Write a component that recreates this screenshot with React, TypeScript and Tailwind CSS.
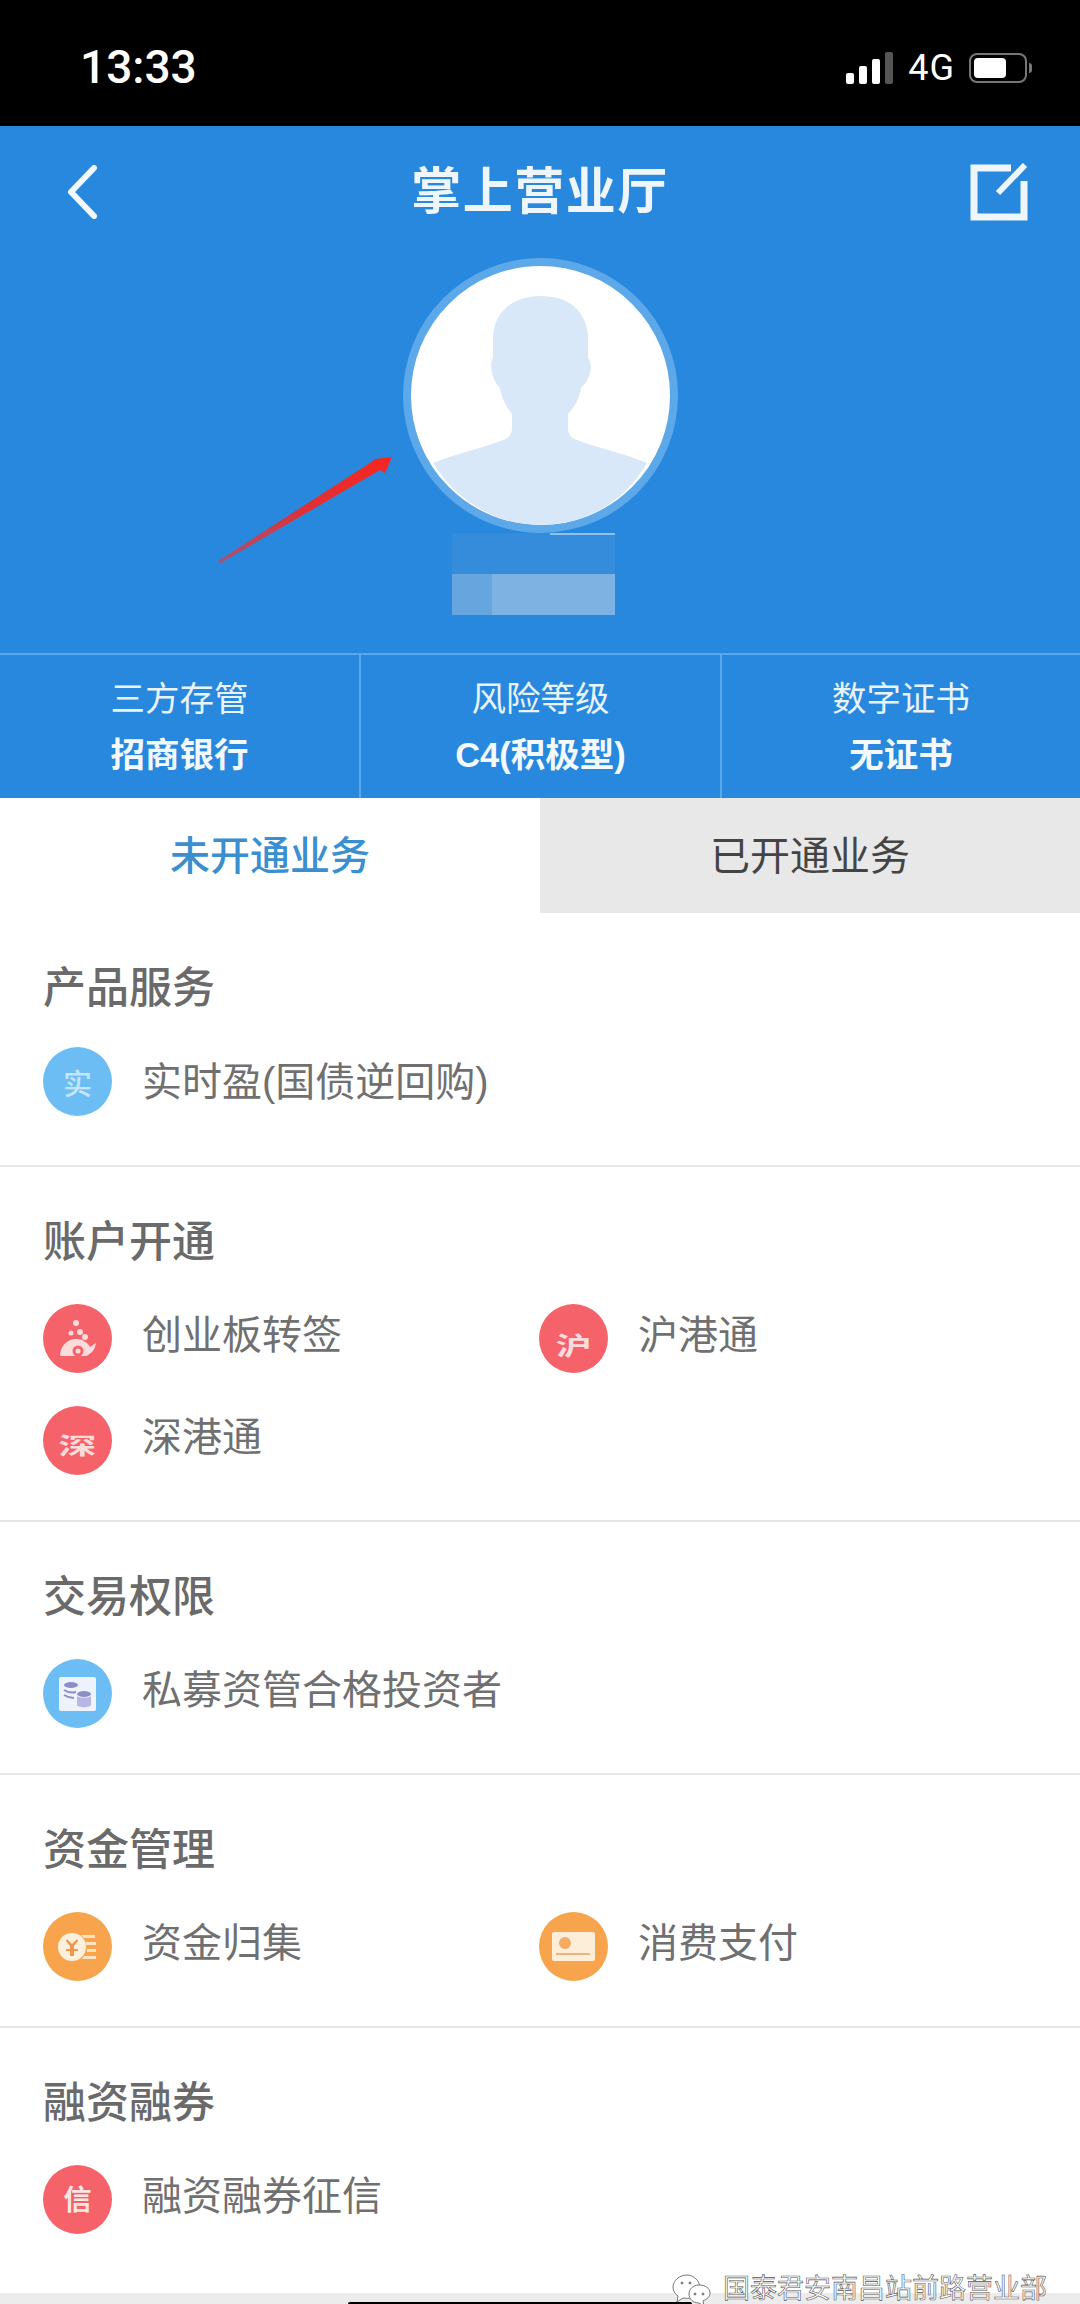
const cjk = "font-['Liberation_Sans','Noto_Sans_CJK_SC',sans-serif]";

const stats = [
  { label: "三方存管", value: "招商银行" },
  { label: "风险等级", value: "C4(积极型)" },
  { label: "数字证书", value: "无证书" },
];

const GlyphIcon = ({ text, color, size }: { text: string; color: string; size: string }) => (
  <div className={`w-[69px] h-[69px] rounded-full flex items-center justify-center shrink-0 ${color}`}>
    <span className={`leading-none ${size}`}>{text}</span>
  </div>
);

const SnailIcon = () => (
  <div className="w-[69px] h-[69px] rounded-full bg-[#f6626a] shrink-0">
    <svg viewBox="0 0 69 69" className="w-full h-full" fill="#fbdcdc">
      <circle cx="33" cy="19" r="3" />
      <circle cx="28" cy="29" r="2.5" />
      <circle cx="37" cy="28" r="3" />
      <circle cx="42" cy="33" r="3" />
      <path d="M17 51c1-11 9-17 18-16 6 1 10 4 12 8l6-4c-1 7-5 11-10 13H20c-2 0-3-.4-3-1z" />
      <circle cx="35" cy="47" r="5.5" fill="#f6626a" />
      <circle cx="35" cy="47" r="2.5" />
    </svg>
  </div>
);

const CoinsIcon = () => (
  <div className="w-[69px] h-[69px] rounded-full bg-[#6dbdf5] shrink-0">
    <svg viewBox="0 0 69 69" className="w-full h-full">
      <rect x="16" y="18" width="37" height="34" rx="2" fill="#eef3fb" />
      <ellipse cx="28" cy="26" rx="7" ry="3" fill="#8a8fc6" />
      <path d="M21 31c3 2 8 3 12 2M21 36c3 2 6 3 10 3" stroke="#8a8fc6" strokeWidth="2" fill="none" />
      <ellipse cx="41" cy="35" rx="7" ry="3" fill="#8a8fc6" />
      <path d="M34 37v9c1 3 13 3 14 0v-9c-2 2-12 2-14 0z" fill="#b9b6e4" />
    </svg>
  </div>
);

const CoinIcon = () => (
  <div className="w-[69px] h-[69px] rounded-full bg-[#f7a44c] shrink-0">
    <svg viewBox="0 0 69 69" className="w-full h-full">
      <path d="M38 23h14v3H41zM43 30h10v3H43zM44 37h9v3h-9zM41 44h12v3H39z" fill="#fbe3c4" />
      <circle cx="29" cy="35" r="14" fill="#fdf0dc" />
      <path d="M24 27l5 5 5-5 1 2-4 5v3h4v2h-4v5h-4v-5h-4v-2h4v-3l-4-5z" fill="#f2974a" />
    </svg>
  </div>
);

const CardIcon = () => (
  <div className="w-[69px] h-[69px] rounded-full bg-[#f7a44c] shrink-0">
    <svg viewBox="0 0 69 69" className="w-full h-full">
      <rect x="13" y="20" width="43" height="29" rx="2" fill="#fdeeda" />
      <circle cx="26" cy="31" r="6" fill="#f5ab62" />
      <rect x="17" y="41" width="34" height="2" fill="#f0b27a" />
    </svg>
  </div>
);

const sections = [
  {
    title: "产品服务",
    items: [{ icon: <GlyphIcon text="实" color="bg-[#6dbdf5] text-[#c4e5fb]" size="text-[29px] font-medium mt-[8px]" />, label: "实时盈(国债逆回购)" }],
  },
  {
    title: "账户开通",
    items: [
      { icon: <SnailIcon />, label: "创业板转签" },
      { icon: <GlyphIcon text="沪" color="bg-[#f6626a] text-[#fbdcdc]" size="text-[36px] font-bold mt-[16px] scale-y-[0.7]" />, label: "沪港通" },
      { icon: <GlyphIcon text="深" color="bg-[#f6626a] text-[#fbdcdc]" size="text-[38px] font-bold mt-[10px] scale-y-[0.6]" />, label: "深港通" },
    ],
  },
  {
    title: "交易权限",
    items: [{ icon: <CoinsIcon />, label: "私募资管合格投资者" }],
  },
  {
    title: "资金管理",
    items: [
      { icon: <CoinIcon />, label: "资金归集" },
      { icon: <CardIcon />, label: "消费支付" },
    ],
  },
  {
    title: "融资融券",
    items: [{ icon: <GlyphIcon text="信" color="bg-[#f6626a] text-[#fbe6e6]" size="text-[28px] font-bold mt-[2px]" />, label: "融资融券征信" }],
  },
];

export default function App() {
  return (
    <div className={`relative w-[1080px] h-[2304px] overflow-hidden bg-white flex flex-col ${cjk}`}>
      {/* status bar */}
      <div className="h-[126px] bg-black shrink-0 flex items-start justify-between pl-[80px] pr-[48px] pt-[42px] text-white">
        <span className="text-[46px] leading-[50px] font-['Roboto',sans-serif] font-medium">13:33</span>
        <div className="flex items-center gap-[14px] h-[40px] mt-[6px]">
          <svg width="48" height="32" viewBox="0 0 48 32">
            <rect x="0" y="21" width="8" height="11" rx="2" fill="#fff" />
            <rect x="13" y="14" width="8" height="18" rx="2" fill="#fff" />
            <rect x="26" y="7" width="8" height="25" rx="2" fill="#fff" />
            <rect x="39" y="0" width="8" height="32" rx="2" fill="#555" />
          </svg>
          <span className="text-[36px] leading-none tracking-[1px] font-['Roboto',sans-serif]">4G</span>
          <div className="flex items-center gap-[2px]">
            <div className="w-[58px] h-[30px] rounded-[8px] border-2 border-[#777] p-[3px]">
              <div className="w-[32px] h-full rounded-[4px] bg-white" />
            </div>
            <div className="w-[3px] h-[10px] rounded-r bg-[#777]" />
          </div>
        </div>
      </div>

      {/* blue header */}
      <div className="relative bg-[#2788dd] h-[672px] shrink-0 flex flex-col">
        <div className="h-[132px] grid grid-cols-[1fr_auto_1fr] items-center shrink-0">
          <div className="pl-[67px]">
            <svg width="30" height="54" viewBox="0 0 30 54" fill="none" stroke="#f2f8fd" strokeWidth="6" strokeLinecap="round" strokeLinejoin="round">
              <path d="M27 3L4 27l23 24" />
            </svg>
          </div>
          <h1 className="text-[50px] leading-none font-bold text-[#eef6fc] tracking-[1.5px]">掌上营业厅</h1>
          <div className="flex justify-end pr-[52px]">
            <svg width="58" height="58" viewBox="0 0 58 58" fill="none" stroke="#eef6fc" strokeWidth="7">
              <path d="M41 5H4v49h50V18" />
              <path d="M28 30L55 2" strokeWidth="6" />
            </svg>
          </div>
        </div>

        <div className="w-[275px] h-[275px] mx-auto rounded-full border-[8px] border-[#5da8e8] bg-white overflow-hidden shrink-0">
          <svg viewBox="8 8 259 259" className="w-full h-full block">
            <path
              d="M138 38C111 38 92 52 90 78L90 100C87 104 88 114 90 118C92 124 94 127 97 130C99 142 104 150 109 156L109 170C109 176 106 180 100 182C80 190 55 195 30 205C55 245 95 267 138 267C181 267 221 245 244 205C220 195 195 190 174 182C168 180 165 176 165 170L165 156C171 150 176 142 178 130C181 127 184 124 186 118C188 114 189 104 185 100L185 78C183 52 165 38 138 38Z"
              fill="#d9e8f8"
            />
          </svg>
        </div>

        {/* blurred user name */}
        <div className="ml-[452px] w-[163px] shrink-0 flex flex-col">
          <div className="h-[41px] bg-[#348cda] flex flex-col items-end">
            <div className="w-[65px] h-[2px] bg-[#8fc1ec]" />
          </div>
          <div className="h-[41px] flex">
            <div className="w-[40px] bg-[#67a5de]" />
            <div className="flex-1 bg-[#7db2e2]" />
          </div>
        </div>

        {/* stats */}
        <div className="mt-auto h-[145px] border-t-2 border-[#5ba7ec] grid grid-cols-[359px_361px_1fr]">
          {stats.map((s, i) => (
            <div key={s.label} className={`flex flex-col items-center justify-center text-[34.5px] leading-[56px] text-[#e8f3fc] ${i > 0 ? "border-l-2 border-[#5ba7ec]" : ""}`}>
              <span>{s.label}</span>
              <span className="font-bold text-[#f4f9fe]">{s.value}</span>
            </div>
          ))}
        </div>

        {/* red annotation arrow */}
        <svg className="absolute left-[210px] top-[320px]" width="190" height="125" viewBox="0 0 190 125">
          <defs>
            <linearGradient id="arrowFill" x1="0" y1="1" x2="1" y2="0">
              <stop offset="0" stopColor="#a0567a" />
              <stop offset="0.5" stopColor="#e03035" />
              <stop offset="1" stopColor="#f8261f" />
            </linearGradient>
          </defs>
          <path d="M8 115L160 17L165 13L182 11L175 27L170 24L9 118Z" fill="url(#arrowFill)" />
        </svg>
      </div>

      {/* tabs */}
      <div className="h-[115px] grid grid-cols-2 shrink-0 text-[40px]">
        <div className="flex items-center justify-center text-[#3a8fd0] font-medium">未开通业务</div>
        <div className="flex items-center justify-center bg-[#e8e8e8] text-[#444]">已开通业务</div>
      </div>

      {/* sections */}
      {sections.map((section, i) => (
        <div key={section.title} className={`px-[43px] shrink-0 ${i > 0 ? "border-t-2 border-[#e6e6e6] pt-[45px] pb-[45px]" : "pt-[45px] pb-[49px]"}`}>
          <h2 className="text-[43px] leading-[60px] font-medium text-[#6a6a6a]">{section.title}</h2>
          <div className={`grid grid-cols-[496px_1fr] gap-y-[33px] ${i > 0 ? "mt-[32px]" : "mt-[29px]"}`}>
            {section.items.map((item) => (
              <div key={item.label} className="flex items-center gap-[30px]">
                {item.icon}
                <span className={`text-[40px] leading-none text-[#707070] ${i > 0 ? "mb-[8px]" : ""}`}>{item.label}</span>
              </div>
            ))}
          </div>
        </div>
      ))}

      {/* bottom strip */}
      <div className="flex-1" />
      <div className="h-[11px] bg-[#ececec] shrink-0 flex items-end">
        <div className="ml-[348px] w-[344px] h-[2px] bg-black rounded-t" />
      </div>

      {/* watermark */}
      <div className="absolute left-[671px] top-[2271px] flex items-center gap-[10px]">
        <svg width="42" height="33" viewBox="0 0 42 33" fill="#fff" stroke="#777" strokeWidth="1">
          <path d="M16 2C8 2 2 8 2 14c0 4 2 7 5 9l-1 6 6-4c5 1 9 0 12-2C30 20 30 10 25 6c-2-2-5-4-9-4z" />
          <path d="M28 12c-6 0-10 4-10 9s4 9 10 9l5 3-1-5c4-2 7-4 7-8 0-5-5-8-11-8z" />
          <circle cx="24" cy="21" r="1" fill="#777" />
          <circle cx="32" cy="21" r="1" fill="#777" />
          <circle cx="11" cy="10" r="1" fill="#777" />
          <circle cx="19" cy="10" r="1" fill="#777" />
        </svg>
        <span className="text-[27px] leading-[36px] text-white [-webkit-text-stroke:0.6px_#555]">国泰君安南昌站前路营业部</span>
      </div>
    </div>
  );
}
